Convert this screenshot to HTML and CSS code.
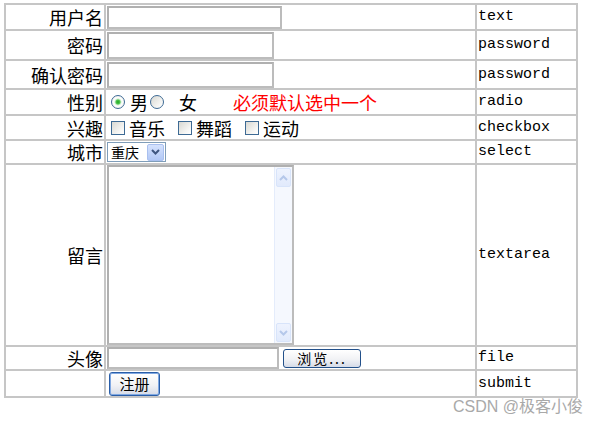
FILE: index.html
```html
<!DOCTYPE html>
<html>
<head>
  <meta charset="utf-8">
  <link rel="stylesheet" href="styles.css">
</head>
<body>
  <form class="register">
    <table class="form-table">
      <tr class="row-user">
        <td class="label">用户名</td>
        <td class="field"><input class="text-box user-box" type="text"></td>
        <td class="type">text</td>
      </tr>
      <tr class="row-pass">
        <td class="label">密码</td>
        <td class="field"><input class="text-box pass-box" type="password"></td>
        <td class="type">password</td>
      </tr>
      <tr class="row-confirm">
        <td class="label">确认密码</td>
        <td class="field"><input class="text-box pass-box confirm-box" type="password"></td>
        <td class="type">password</td>
      </tr>
      <tr class="row-sex">
        <td class="label">性别</td>
        <td class="field">
          <div class="options">
            <input class="radio first" type="radio" name="sex" checked><span class="opt-text male">男</span>
            <input class="radio second" type="radio" name="sex"><span class="opt-text female">女</span>
            <span class="hint">必须默认选中一个</span>
          </div>
        </td>
        <td class="type">radio</td>
      </tr>
      <tr class="row-hobby">
        <td class="label">兴趣</td>
        <td class="field">
          <div class="options">
            <input class="check first" type="checkbox"><span class="opt-text">音乐</span>
            <input class="check" type="checkbox"><span class="opt-text">舞蹈</span>
            <input class="check" type="checkbox"><span class="opt-text">运动</span>
          </div>
        </td>
        <td class="type">checkbox</td>
      </tr>
      <tr class="row-city">
        <td class="label">城市</td>
        <td class="field">
          <div class="select-box">
            <select class="city">
              <option>重庆</option>
              <option>北京</option>
              <option>上海</option>
            </select>
            <span class="select-btn">
              <svg width="9" height="6" viewBox="0 0 9 6"><path d="M1 1l3.5 3.5L8 1" fill="none" stroke="#3f5680" stroke-width="2"/></svg>
            </span>
          </div>
        </td>
        <td class="type">select</td>
      </tr>
      <tr class="row-memo">
        <td class="label">留言</td>
        <td class="field">
          <div class="memo">
            <textarea class="memo-text"></textarea>
            <div class="scroll">
              <span class="scroll-btn">
                <svg width="9" height="6" viewBox="0 0 9 6"><path d="M1 5l3.5-3.5L8 5" fill="none" stroke="#b5c8ea" stroke-width="2"/></svg>
              </span>
              <span class="scroll-btn">
                <svg width="9" height="6" viewBox="0 0 9 6"><path d="M1 1l3.5 3.5L8 1" fill="none" stroke="#b5c8ea" stroke-width="2"/></svg>
              </span>
            </div>
          </div>
        </td>
        <td class="type">textarea</td>
      </tr>
      <tr class="row-file">
        <td class="label">头像</td>
        <td class="field">
          <div class="file-line">
            <input class="text-box file-box" type="text">
            <button class="btn browse" type="button">浏览...</button>
          </div>
        </td>
        <td class="type">file</td>
      </tr>
      <tr class="row-submit">
        <td class="label"></td>
        <td class="field"><button class="btn submit" type="submit">注册</button></td>
        <td class="type">submit</td>
      </tr>
    </table>
  </form>
  <div class="watermark">CSDN @极客小俊</div>
</body>
</html>
```

FILE: styles.css
```css
body {
  margin: 3px 0 0 4px;
  background: #fff;
  color: #000;
  font-family: "Noto Sans CJK SC", sans-serif;
}
.register {
  margin: 0;
}
.form-table {
  border-collapse: separate;
  border-spacing: 0;
  border: 1px solid #c6c6c6;
  table-layout: fixed;
  width: 574px;
}
.form-table td {
  border: 1px solid #c6c6c6;
  padding: 0 1px;
  box-sizing: border-box;
  vertical-align: middle;
}
.row-user { height: 26px; }
.row-pass { height: 30px; }
.row-confirm { height: 29px; }
.row-sex { height: 26px; }
.row-hobby { height: 25px; }
.row-city { height: 24px; }
.row-memo { height: 182px; }
.row-file { height: 24px; }
.row-submit { height: 27px; }

.label {
  width: 100px;
  text-align: right;
  font-size: 18px;
  line-height: 20px;
  padding-right: 2px;
}
.type {
  width: 101px;
  font-family: "Liberation Mono", monospace;
  font-size: 15px;
  line-height: 20px;
}

/* text boxes */
.text-box {
  display: block;
  box-sizing: border-box;
  margin: 0;
  border: 2px solid #bcbcbc;
  border-top-color: #b0b0b0;
  border-left-color: #b0b0b0;
  background: #fff;
  outline: none;
  padding: 0 3px;
}
.user-box {
  width: 175px;
  height: 23px;
}
.pass-box {
  width: 167px;
  height: 27px;
}
.confirm-box {
  height: 26px;
}
.file-box {
  width: 172px;
  height: 22px;
}

/* radio + checkbox */
.options {
  display: flex;
  align-items: center;
  font-size: 18px;
  line-height: 20px;
}
.radio,
.check {
  appearance: none;
  flex: none;
  margin: 0;
  width: 14px;
  height: 14px;
  box-sizing: border-box;
  border: 1px solid #3d6a94;
  background: linear-gradient(135deg, #d8d8d2, #f6f6f4 70%, #fff);
}
.radio {
  border-radius: 50%;
}
.radio.first,
.check.first {
  margin-left: 4px;
}
.radio.second {
  margin-left: 2px;
}
.radio:checked {
  background: radial-gradient(circle, #21a621 0, #4cc44c 2px, #c8edc8 3px, #fff 4px, #e6e6e2 100%);
}
.opt-text {
  margin-left: 4px;
}
.opt-text.male {
  margin-left: 5px;
}
.opt-text.female {
  margin-left: 15px;
}
.check {
  margin-left: 13px;
}
.hint {
  margin-left: 36px;
  color: #f00;
}

/* select */
.select-box {
  display: flex;
  align-items: center;
  width: 59px;
  height: 20px;
  box-sizing: border-box;
  border: 1px solid #7f9db9;
  background: #fff;
}
.city {
  appearance: none;
  border: 0;
  outline: none;
  background: transparent;
  margin: 0;
  padding: 0 0 0 3px;
  width: 40px;
  font-family: "Noto Sans CJK SC", sans-serif;
  font-size: 14px;
  line-height: 18px;
}
.select-btn {
  display: flex;
  align-items: center;
  justify-content: center;
  width: 17px;
  height: 17px;
  box-sizing: border-box;
  margin-left: auto;
  margin-right: 1px;
  border: 1px solid #a9c0ef;
  border-radius: 2px;
  background: linear-gradient(#d5e2fd, #b2c8f6);
}

/* textarea */
.memo {
  display: flex;
  width: 187px;
  height: 180px;
  box-sizing: border-box;
  border: 2px solid #bcbcbc;
  border-top-color: #b0b0b0;
  border-left-color: #b0b0b0;
}
.memo-text {
  flex: 1;
  border: 0;
  margin: 0;
  padding: 2px;
  resize: none;
  outline: none;
  overflow: hidden;
}
.scroll {
  display: flex;
  flex-direction: column;
  justify-content: space-between;
  width: 18px;
  padding: 1px 0;
  box-sizing: border-box;
  background: #f5f8fe;
  border-left: 1px solid #e4ecfb;
}
.scroll-btn {
  display: flex;
  align-items: center;
  justify-content: center;
  height: 17px;
  margin: 0 1px;
  border: 1px solid #d8e4fa;
  border-radius: 2px;
  background: linear-gradient(#eef3fe, #e1eafc);
}

/* buttons */
.file-line {
  display: flex;
  align-items: center;
}
.btn {
  margin: 0;
  padding: 0;
  box-sizing: border-box;
  border: 1px solid #22508a;
  border-radius: 3px;
  background: linear-gradient(#fff, #f1f2f5 55%, #d5dbe8);
  font-family: "Noto Sans CJK SC", sans-serif;
  color: #000;
  cursor: pointer;
}
.browse {
  margin-left: 4px;
  width: 78px;
  height: 19px;
  font-size: 14px;
  line-height: 15px;
  letter-spacing: 2px;
}
.submit {
  display: block;
  margin-left: 2px;
  width: 51px;
  height: 24px;
  font-size: 15px;
  line-height: 18px;
  border-color: #2a5ea8;
  box-shadow: inset 0 0 0 1px #80a8e2;
}

.watermark {
  position: absolute;
  left: 453px;
  top: 393px;
  font-family: "Liberation Sans", "Noto Sans CJK SC", sans-serif;
  font-size: 16px;
  color: #a9a9a9;
}
```
